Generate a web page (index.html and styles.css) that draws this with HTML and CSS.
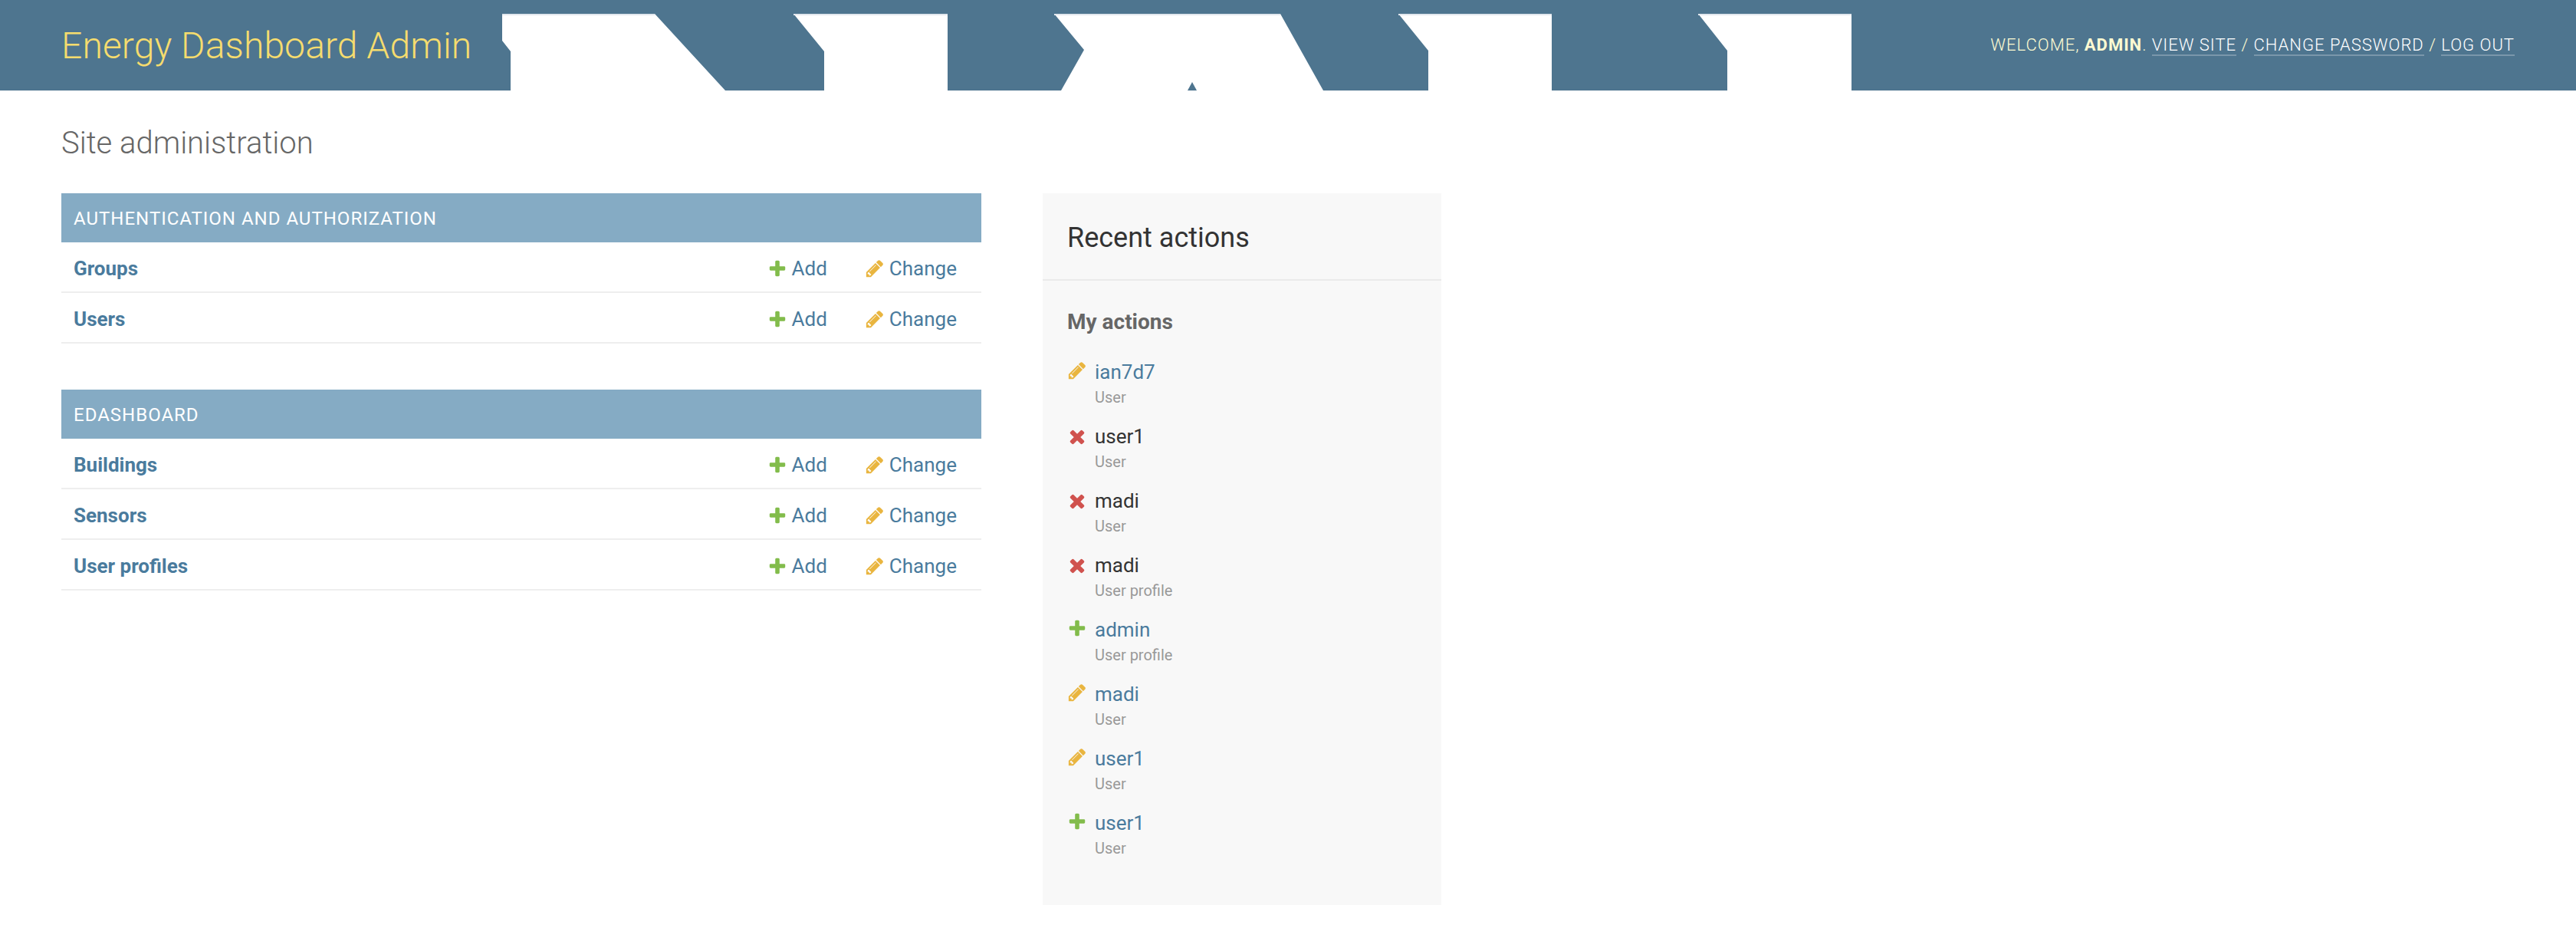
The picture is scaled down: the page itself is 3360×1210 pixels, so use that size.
FILE: index.html
```html
<!DOCTYPE html>
<html lang="en">
<head>
<meta charset="utf-8">
<title>Site administration</title>
<link rel="stylesheet" href="styles.css">
</head>
<body>
<svg class="defs" width="0" height="0" aria-hidden="true">
  <symbol id="i-add" viewBox="0 0 1792 1792"><path d="M1600 796v192q0 40-28 68t-68 28h-416v416q0 40-28 68t-68 28h-192q-40 0-68-28t-28-68v-416h-416q-40 0-68-28t-28-68v-192q0-40 28-68t68-28h416v-416q0-40 28-68t68-28h192q40 0 68 28t28 68v416h416q40 0 68 28t28 68z"/></symbol>
  <symbol id="i-change" viewBox="0 0 1792 1792"><path d="M491 1536l91-91-235-235-91 91v107h128v128h107zm523-928q0-22-22-22-10 0-17 7l-542 542q-7 7-7 17 0 22 22 22 10 0 17-7l542-542q7-7 7-17zm-54-192l416 416-832 832h-416v-416zm683 96q0 53-37 90l-166 166-416-416 166-165q36-38 90-38 53 0 91 38l235 234q37 39 37 91z"/></symbol>
  <symbol id="i-delete" viewBox="0 0 1792 1792"><path d="M1490 1322q0 40-28 68l-136 136q-28 28-68 28t-68-28l-294-294-294 294q-28 28-68 28t-68-28l-136-136q-28-28-28-68t28-68l294-294-294-294q-28-28-28-68t28-68l136-136q28-28 68-28t68 28l294 294 294-294q28-28 68-28t68 28l136 136q28 28 28 68t-28 68l-294 294 294 294q28 28 28 68z"/></symbol>
</svg>

<header class="header">
  <h1 class="brand">Energy Dashboard Admin</h1>
  <svg class="logo" viewBox="0 0 1760 100" width="1760" height="100" aria-hidden="true">
    <g class="logo-shapes">
      <polygon points="0,0 199,0 291,100 11,100 11,49 0,35"/>
      <polygon points="380,0 581,0 581,100 420,100 420,49"/>
      <polygon points="720,0 1015,0 1071,100 729,100 759,47"/>
      <polygon points="1169,0 1369,0 1369,100 1208,100 1208,48"/>
      <polygon points="1560,0 1760,0 1760,100 1598,100 1598,48"/>
    </g>
    <polygon class="logo-notch" points="900,89 894,100 906,100"/>
    <g class="logo-edge">
      <rect x="0" y="0" width="199" height="2"/>
      <rect x="380" y="0" width="201" height="2"/>
      <rect x="720" y="0" width="295" height="2"/>
      <rect x="1169" y="0" width="200" height="2"/>
      <rect x="1560" y="0" width="200" height="2"/>
    </g>
  </svg>
  <div class="user-tools">Welcome, <strong>admin</strong>. <a href="#">View site</a> / <a href="#">Change password</a> / <a href="#">Log out</a></div>
</header>

<main class="content">
  <h1 class="page-title">Site administration</h1>
  <div class="columns">
    <div class="apps">
      <section class="module">
        <h2 class="caption">Authentication and Authorization</h2>
        <div class="row">
          <a class="model" href="#">Groups</a>
          <a class="act act-add" href="#"><svg class="ico add"><use href="#i-add"/></svg>Add</a>
          <a class="act" href="#"><svg class="ico change"><use href="#i-change"/></svg>Change</a>
        </div>
        <div class="row">
          <a class="model" href="#">Users</a>
          <a class="act act-add" href="#"><svg class="ico add"><use href="#i-add"/></svg>Add</a>
          <a class="act" href="#"><svg class="ico change"><use href="#i-change"/></svg>Change</a>
        </div>
      </section>
      <section class="module">
        <h2 class="caption">Edashboard</h2>
        <div class="row">
          <a class="model" href="#">Buildings</a>
          <a class="act act-add" href="#"><svg class="ico add"><use href="#i-add"/></svg>Add</a>
          <a class="act" href="#"><svg class="ico change"><use href="#i-change"/></svg>Change</a>
        </div>
        <div class="row">
          <a class="model" href="#">Sensors</a>
          <a class="act act-add" href="#"><svg class="ico add"><use href="#i-add"/></svg>Add</a>
          <a class="act" href="#"><svg class="ico change"><use href="#i-change"/></svg>Change</a>
        </div>
        <div class="row">
          <a class="model" href="#">User profiles</a>
          <a class="act act-add" href="#"><svg class="ico add"><use href="#i-add"/></svg>Add</a>
          <a class="act" href="#"><svg class="ico change"><use href="#i-change"/></svg>Change</a>
        </div>
      </section>
    </div>
    <aside class="recent">
      <h2 class="recent-title">Recent actions</h2>
      <h3 class="recent-sub">My actions</h3>
      <ul class="actions">
        <li class="item"><svg class="ico change"><use href="#i-change"/></svg><div><a class="name" href="#">ian7d7</a><span class="type">User</span></div></li>
        <li class="item"><svg class="ico delete"><use href="#i-delete"/></svg><div><span class="name">user1</span><span class="type">User</span></div></li>
        <li class="item"><svg class="ico delete"><use href="#i-delete"/></svg><div><span class="name">madi</span><span class="type">User</span></div></li>
        <li class="item"><svg class="ico delete"><use href="#i-delete"/></svg><div><span class="name">madi</span><span class="type">User profile</span></div></li>
        <li class="item"><svg class="ico add"><use href="#i-add"/></svg><div><a class="name" href="#">admin</a><span class="type">User profile</span></div></li>
        <li class="item"><svg class="ico change"><use href="#i-change"/></svg><div><a class="name" href="#">madi</a><span class="type">User</span></div></li>
        <li class="item"><svg class="ico change"><use href="#i-change"/></svg><div><a class="name" href="#">user1</a><span class="type">User</span></div></li>
        <li class="item"><svg class="ico add"><use href="#i-add"/></svg><div><a class="name" href="#">user1</a><span class="type">User</span></div></li>
      </ul>
    </aside>
  </div>
</main>
</body>
</html>
```
FILE: styles.css
```css
* { box-sizing: border-box; }
html, body { margin: 0; padding: 0; background: #fff; }
body { font-family: Roboto, "Liberation Sans", sans-serif; font-size: 28px; color: #333; }
a { color: #4a7b9d; text-decoration: none; }
.defs { position: absolute; }

.header {
  display: flex;
  height: 118px;
  padding: 0 80px;
  background: #4e758f;
  align-items: center;
}
.brand {
  width: 575px;
  flex: none;
  margin: 0;
  padding-top: 2px;
  font-size: 48px;
  font-weight: 300;
  line-height: 64px;
  letter-spacing: 0.1px;
  color: #f5dc6e;
  white-space: nowrap;
}
.logo { flex: none; align-self: flex-end; }
.logo-shapes { fill: #fff; }
.logo-notch { fill: #4e758f; }
.logo-edge { fill: #e2e7ee; }
.user-tools {
  margin-left: auto;
  font-size: 22px;
  font-weight: 300;
  line-height: 32px;
  letter-spacing: 1px;
  text-transform: uppercase;
  white-space: nowrap;
  color: #fdfbd2;
}
.user-tools strong { font-weight: 700; }
.user-tools a { color: #fff; border-bottom: 2px solid rgba(255, 255, 255, 0.25); }

.content { padding: 40px 80px; }
.page-title {
  margin: 0 0 38px;
  padding-top: 2px;
  font-size: 40px;
  font-weight: 300;
  line-height: 54px;
  color: #666;
}
.columns { display: flex; gap: 80px; align-items: flex-start; }
.apps { width: 1200px; flex: none; }
.module { margin-bottom: 60px; }
.caption {
  margin: 0;
  height: 64px;
  padding: 3px 16px 0;
  font-size: 24px;
  font-weight: 400;
  line-height: 61px;
  letter-spacing: 1px;
  text-transform: uppercase;
  color: #fff;
  background: #85abc4;
}
.row {
  display: flex;
  align-items: center;
  height: 66px;
  padding: 3px 32px 0 16px;
  border-bottom: 2px solid #eee;
  font-size: 26px;
}
.model { flex: 1; font-weight: 700; }
.act { display: flex; align-items: center; gap: 6px; }
.act-add { margin-right: 49px; }
.ico { flex: none; width: 26px; height: 26px; }
.add { fill: #82bc4b; }
.change { fill: #e9b53f; }
.delete { fill: #d0524e; }

.recent { width: 520px; flex: none; height: 928px; background: #f8f8f8; }
.recent-title {
  margin: 0;
  padding: 34px 32px 30px;
  font-size: 36px;
  font-weight: 400;
  line-height: 48px;
  color: #333;
  border-bottom: 2px solid #eaeaea;
}
.recent-sub {
  margin: 38px 32px 32px;
  font-size: 28px;
  font-weight: 700;
  line-height: 32px;
  color: #666;
}
.actions { list-style: none; margin: 0; padding: 0 32px; }
.item { display: flex; gap: 10px; height: 84px; }
.item .ico { margin-top: 2px; }
.item .delete { width: 28px; height: 28px; margin: 3px -1px 0; }
.name { display: block; font-size: 26px; line-height: 34px; }
span.name { color: #333; }
.type { display: block; font-size: 20px; line-height: 32px; color: #999; }
```
